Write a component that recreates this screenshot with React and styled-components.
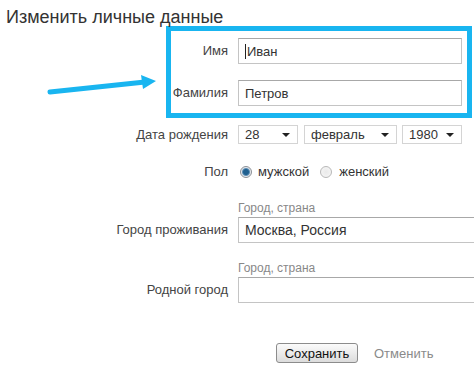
import React from "react";
import styled, { createGlobalStyle } from "styled-components";

const Global = createGlobalStyle`
  html, body { margin: 0; padding: 0; background: #fff; overflow: hidden; }
  body { font-family: "Liberation Sans", Arial, sans-serif; color: #333; }
  * { box-sizing: border-box; }
`;

const Page = styled.div`
  position: relative;
  width: 474px;
  height: 372px;
  overflow: hidden;
`;

const Title = styled.h1`
  margin: 0;
  padding: 8px 0 0 6px;
  font-size: 18px;
  line-height: 18px;
  font-weight: normal;
  color: #333;
`;

const Highlight = styled.div`
  margin-left: 166px;
  width: 306px;
  border: 5px solid #19b5f0;
  padding: 7px 5px 7px 0;
  display: flex;
  flex-direction: column;
  gap: 16px;
`;

const Row = styled.div`
  display: grid;
  grid-template-columns: ${(p) => p.$label || 228}px auto;
  column-gap: 10px;
  align-items: ${(p) => (p.$hinted ? "end" : "center")};
  margin-top: ${(p) => p.$top || 0}px;
`;

const Label = styled.div`
  text-align: right;
  font-size: 13px;
  line-height: ${(p) => p.$h || 16}px;
  color: #444;
  white-space: nowrap;
`;

const Field = styled.div`
  display: flex;
  flex-direction: column;
  gap: 2px;
`;

const Hint = styled.div`
  font-size: 12px;
  line-height: 14px;
  color: #888;
`;

const TextInput = styled.div`
  width: ${(p) => p.$w || 224}px;
  height: 26px;
  border: 1px solid #c4c4c4;
  border-top-color: #a8a8a8;
  background: #fff;
  display: flex;
  align-items: center;
  padding-left: 6px;
  font-size: ${(p) => p.$fs || 13}px;
  color: #333;
  white-space: nowrap;
`;

const Caret = styled.span`
  display: inline-block;
  width: 1px;
  height: 15px;
  background: #222;
  margin-right: 1px;
`;

const Selects = styled.div`
  display: flex;
  gap: 6px;
`;

const Select = styled.div`
  width: ${(p) => p.$w}px;
  height: 19px;
  border: 1px solid #d4d4d4;
  background: #fff;
  display: flex;
  align-items: center;
  justify-content: space-between;
  padding: 0 7px 0 6px;
  font-size: 13px;
  color: #333;
  margin-left: ${(p) => p.$ml || 0}px;
`;

const Arrow = styled.span`
  width: 0;
  height: 0;
  border-left: 4px solid transparent;
  border-right: 4px solid transparent;
  border-top: 4px solid #222;
  margin-top: 1px;
`;

const Radios = styled.div`
  display: flex;
  align-items: center;
  font-size: 13px;
  color: #333;
  line-height: 16px;
`;

const RadioDot = styled.span`
  width: 12px;
  height: 12px;
  border-radius: 50%;
  border: 1px solid ${(p) => (p.$on ? "#8a8f96" : "#b8b8b8")};
  background: ${(p) =>
    p.$on
      ? "radial-gradient(circle, #1f5f8f 0 2.5px, #5d8fb5 3.5px, #e6e9ee 4.5px, #f6f6f6 100%)"
      : "radial-gradient(circle, #e9e9e9 0, #f8f8f8 100%)"};
  margin: ${(p) => (p.$first ? "0 6px 0 2px" : "0 7px 0 11px")};
  flex: none;
`;

const Buttons = styled.div`
  display: flex;
  align-items: center;
  gap: 16px;
  margin-top: 40px;
  padding-left: 276px;
`;

const SaveButton = styled.button`
  width: 82px;
  height: 20px;
  border: 1px solid #8c8c8c;
  border-radius: 3px;
  background: linear-gradient(#fbfbfb, #dcdcdc);
  font-family: "Liberation Sans", Arial, sans-serif;
  font-size: 13px;
  color: #111;
  padding: 0;
`;

const CancelLink = styled.span`
  font-size: 13px;
  color: #8a8a8a;
`;

const Pointer = styled.svg`
  position: absolute;
  left: 0;
  top: 0;
`;

export default function App() {
  return (
    <>
      <Global />
      <Page>
        <Title>Изменить личные данные</Title>
        <Highlight>
          <Row $label={57}>
            <Label>Имя</Label>
            <TextInput>
              <Caret />
              Иван
            </TextInput>
          </Row>
          <Row $label={57}>
            <Label>Фамилия</Label>
            <TextInput>Петров</TextInput>
          </Row>
        </Highlight>
        <Row $top={7}>
          <Label>Дата рождения</Label>
          <Selects>
            <Select $w={60}>
              28
              <Arrow />
            </Select>
            <Select $w={93}>
              февраль
              <Arrow />
            </Select>
            <Select $w={60} $ml={-1}>
              1980
              <Arrow />
            </Select>
          </Selects>
        </Row>
        <Row $top={20}>
          <Label>Пол</Label>
          <Radios>
            <RadioDot $on $first />
            мужской
            <RadioDot />
            женский
          </Radios>
        </Row>
        <Row $top={21} $hinted>
          <Label $h={26}>Город проживания</Label>
          <Field>
            <Hint>Город, страна</Hint>
            <TextInput $w={260} $fs={14}>Москва, Россия</TextInput>
          </Field>
        </Row>
        <Row $top={18} $hinted>
          <Label $h={26}>Родной город</Label>
          <Field>
            <Hint>Город, страна</Hint>
            <TextInput $w={260} />
          </Field>
        </Row>
        <Buttons>
          <SaveButton>Сохранить</SaveButton>
          <CancelLink>Отменить</CancelLink>
        </Buttons>
        <Pointer width="170" height="110" viewBox="0 0 170 110">
          <line x1="50" y1="92" x2="145" y2="82" stroke="#19b5f0" strokeWidth="5" strokeLinecap="round" />
          <polygon points="141,75 156,81 143,89" fill="#19b5f0" />
        </Pointer>
      </Page>
    </>
  );
}
